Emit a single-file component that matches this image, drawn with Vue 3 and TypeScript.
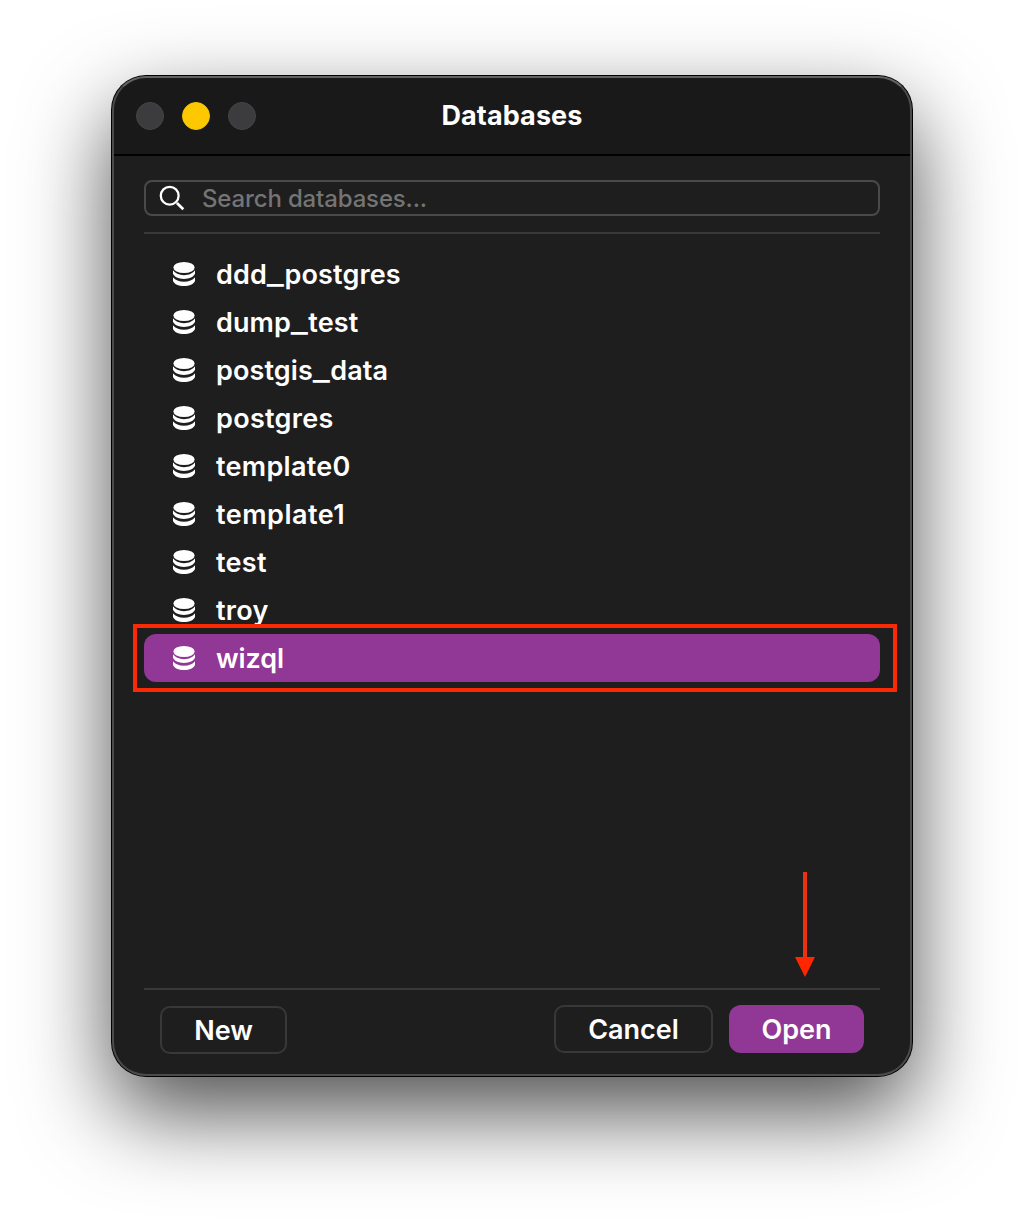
<script setup lang="ts">
import { ref } from 'vue'

interface Database {
  name: string
  spacing: number
}

const databases: Database[] = [
  { name: 'ddd_postgres', spacing: 0.15 },
  { name: 'dump_test', spacing: 0.1 },
  { name: 'postgis_data', spacing: 0.1 },
  { name: 'postgres', spacing: 0.3 },
  { name: 'template0', spacing: 0.3 },
  { name: 'template1', spacing: 0.5 },
  { name: 'test', spacing: 0.3 },
  { name: 'troy', spacing: 0.3 },
  { name: 'wizql', spacing: -0.1 },
]
const selected = ref('wizql')

const pieces = (name: string): string[] => name.split(/(_)/)
</script>

<template>
  <main class="stage">
    <section class="window">
      <header class="titlebar">
        <div class="lights">
          <i class="light"></i>
          <i class="light minimize"></i>
          <i class="light"></i>
        </div>
        <h1 class="title">Databases</h1>
      </header>

      <div class="content">
        <div class="search">
          <svg class="search-icon" width="28" height="28" viewBox="0 0 28 28" fill="none" stroke="#fff">
            <circle cx="11.7" cy="11.7" r="8.9" stroke-width="2.3" />
            <path d="M18.9 19L25.3 25.3" stroke-width="2.7" />
          </svg>
          <span class="placeholder">Search databases...</span>
        </div>

        <ul class="list">
          <li
            v-for="db in databases"
            :key="db.name"
            class="row"
            :class="{ selected: db.name === selected }"
            @click="selected = db.name"
          >
            <svg class="db-icon" width="22" height="24" viewBox="0 0 22 24" fill="#fff">
              <ellipse cx="11" cy="5.5" rx="10.6" ry="5.5" />
              <path d="M0 8.3C2 11.300 6 13.200 11 13.200S20 11.300 22 8.300V11.800C20.800 14.800 16.600 17 11 17S1.200 14.800 0 11.800Z" />
              <path d="M0 15.300C2.200 18.300 6.200 19.700 11 19.700S19.800 18.300 22 15.300V19C20.800 22 16.600 24 11 24S1.200 22 0 19Z" />
            </svg>
            <span class="name" :style="{ letterSpacing: db.spacing + 'px' }"><span
              v-for="(piece, i) in pieces(db.name)"
              :key="i"
              :class="{ underscore: piece === '_' }"
            >{{ piece }}</span></span>
            <span v-if="db.name === selected" class="highlight"></span>
          </li>
        </ul>

        <footer class="footer">
          <button class="btn new">New</button>
          <button class="btn cancel">Cancel</button>
          <button class="btn open">Open</button>
          <svg class="arrow" width="20" height="106" viewBox="0 0 20 106">
            <path d="M10 0V86" stroke="#ea3210" stroke-width="4" />
            <path d="M0 85H20L10 105Z" fill="#ff2600" />
          </svg>
        </footer>
      </div>
    </section>
  </main>
</template>

<style>
body {
  background: #fff;
  overflow: hidden;
}
</style>

<style scoped>
.stage {
  box-sizing: border-box;
  width: 1024px;
  height: 1224px;
  padding: 76px 112px 0;
  overflow: hidden;
  font-family: Inter, "Liberation Sans", sans-serif;
  color: #fff;
}
.window {
  position: relative;
  display: flex;
  flex-direction: column;
  width: 800px;
  height: 1000px;
  border-radius: 34px;
  background: #1e1e1e;
  box-shadow: 0 0 0 1px #000, 0 36px 88px rgba(0, 0, 0, 0.7);
}
.window::after {
  content: "";
  position: absolute;
  inset: 0;
  border: 2px solid #4b4b4b;
  border-top-color: #626262;
  border-radius: 34px;
  pointer-events: none;
}
.titlebar {
  box-sizing: border-box;
  display: grid;
  grid-template-columns: 1fr auto 1fr;
  align-items: center;
  height: 80px;
  padding: 0 24px;
  border-bottom: 2px solid #000;
  border-radius: 34px 34px 0 0;
  background: #19191a;
}
.lights {
  display: flex;
  gap: 18px;
  padding-top: 2px;
}
.light {
  box-sizing: border-box;
  width: 28px;
  height: 28px;
  border: 1px solid #454547;
  border-radius: 50%;
  background: #3c3c3e;
}
.light.minimize {
  border-color: #f2c40d;
  background: #fdc800;
}
.title {
  margin: 0;
  padding-top: 2px;
  font-size: 27px;
  font-weight: 670;
  line-height: 32px;
  letter-spacing: 0.1px;
}
.content {
  display: flex;
  flex: 1;
  flex-direction: column;
  padding: 24px 32px 0;
}
.search {
  box-sizing: border-box;
  display: flex;
  align-items: center;
  height: 36px;
  padding-left: 12px;
  border: 2px solid #4a4a4a;
  border-radius: 8px;
}
.search-icon {
  flex: none;
}
.placeholder {
  margin-left: 16px;
  padding-top: 2px;
  font-size: 24px;
  font-weight: 450;
  line-height: 30px;
  letter-spacing: -0.15px;
  color: #747474;
}
.list {
  flex: 1;
  margin: 16px 0 0;
  padding: 16px 0 0;
  border-top: 2px solid #383838;
  list-style: none;
}
.row {
  position: relative;
  display: flex;
  align-items: center;
  height: 48px;
  padding-left: 29px;
  border-radius: 12px;
}
.row.selected {
  background: #913795;
}
.name {
  margin-left: 21px;
  padding-top: 2px;
  font-size: 27px;
  font-weight: 600;
  line-height: 46px;
}
.underscore {
  display: inline-block;
  margin: 0 2.3px;
  transform: scaleX(1.35);
}
.highlight {
  position: absolute;
  inset: -10px -17px -10px -11px;
  border: 4px solid #fb2a06;
  pointer-events: none;
}
.footer {
  position: relative;
  box-sizing: border-box;
  display: flex;
  align-items: flex-start;
  height: 88px;
  padding: 15px 16px 0;
  border-top: 2px solid #383838;
}
.btn {
  box-sizing: border-box;
  height: 48px;
  padding: 2px 0 0;
  border: 2px solid #383838;
  border-radius: 10px;
  background: transparent;
  color: #fff;
  font: 600 27px/42px Inter, "Liberation Sans", sans-serif;
}
.new {
  width: 127px;
  margin: 1px auto 0 0;
}
.cancel {
  width: 159px;
}
.open {
  width: 135px;
  margin-left: 16px;
  border: 0;
  border-radius: 12px;
  background: #913795;
}
.arrow {
  position: absolute;
  right: 65px;
  top: -118px;
}
</style>
